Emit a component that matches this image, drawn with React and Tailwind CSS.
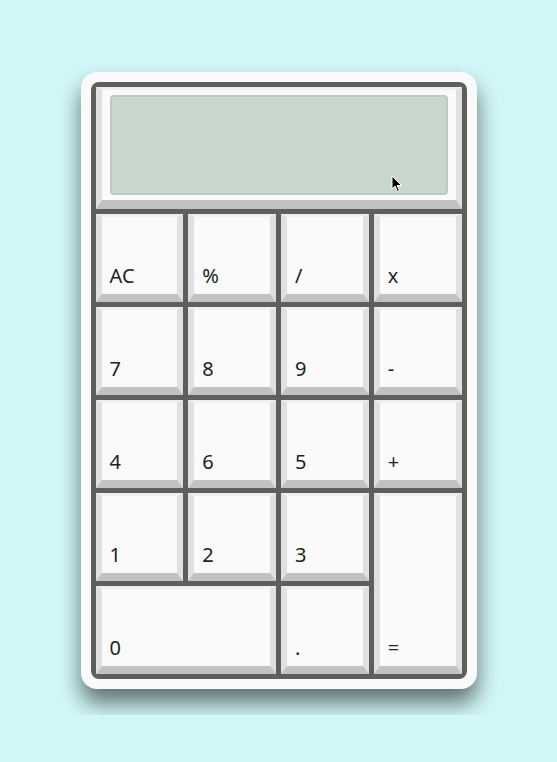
import React from 'react';

const keys = [
  { label: 'AC' },
  { label: '%' },
  { label: '/' },
  { label: 'x' },
  { label: '7' },
  { label: '8' },
  { label: '9' },
  { label: '-' },
  { label: '4' },
  { label: '6' },
  { label: '5' },
  { label: '+' },
  { label: '1' },
  { label: '2' },
  { label: '3' },
  { label: '=', className: 'row-span-2' },
  { label: '0', className: 'col-span-2' },
  { label: '.' },
];

const Key = ({ label, className = '' }) => (
  <button
    className={`flex items-end bg-[#fafafa] border-solid border-t-[3px] border-x-[6px] border-b-[8px] border-t-[#efefef] border-x-[#e0e0e0] border-b-[#c2c2c2] pl-[8px] pb-[8px] text-left text-[20px] leading-none text-[#222] ${className}`}
  >
    {label}
  </button>
);

const App = () => {
  return (
    <div className="h-[762px] bg-[#d2f7f8]" style={{ fontFamily: '"Noto Sans", "DejaVu Sans", sans-serif' }}>
      <div className="h-[715px] overflow-hidden pt-[72px]">
        <div className="mx-auto w-[396px] rounded-[16px] bg-[#fafafa] p-[10px] shadow-[0_14px_22px_rgba(0,0,0,0.55)]">
          <div className="rounded-[8px] bg-[#5e5e5e] p-[5px] flex flex-col gap-[5px]">
            {/* display */}
            <div className="relative h-[122px] bg-[#fafafa] border-solid border-t-[3px] border-x-[6px] border-b-[9px] border-t-[#efefef] border-x-[#e0e0e0] border-b-[#c2c2c2] px-[8px] pt-[5px] pb-[5px]">
              <div className="h-full rounded-[4px] bg-[#c8d6cc] border-2 border-[#bccbc0]" />
              <svg className="absolute left-[289px] top-[85px]" width="12" height="18" viewBox="0 0 12 18">
                <path d="M1 1 L1 14 L4 11 L6.5 16.5 L8.5 15.5 L6 10.5 L10.5 10.5 Z" fill="#000" stroke="#fff" strokeWidth="1" />
              </svg>
            </div>
            {/* keypad */}
            <div className="grid grid-cols-4 auto-rows-[88px] gap-[5px]">
              {keys.map((k) => (
                <Key key={k.label} label={k.label} className={k.className} />
              ))}
            </div>
          </div>
        </div>
      </div>
    </div>
  );
};

export default App;
